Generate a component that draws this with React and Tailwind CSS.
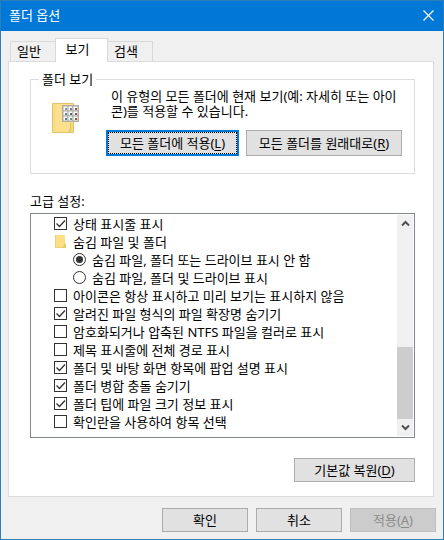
import { useState } from 'react'

const PESTANAS = [
  { id: 'general', texto: '일반' },
  { id: 'view', texto: '보기' },
  { id: 'search', texto: '검색' },
]

const OPCIONES = [
  { tipo: 'check', id: 'statusbar', texto: '상태 표시줄 표시', activo: true },
  { tipo: 'grupo', id: 'hidden', texto: '숨김 파일 및 폴더' },
  { tipo: 'radio', id: 'hide', texto: '숨김 파일, 폴더 또는 드라이브 표시 안 함', activo: true },
  { tipo: 'radio', id: 'show', texto: '숨김 파일, 폴더 및 드라이브 표시' },
  { tipo: 'check', id: 'icons', texto: '아이콘은 항상 표시하고 미리 보기는 표시하지 않음' },
  { tipo: 'check', id: 'ext', texto: '알려진 파일 형식의 파일 확장명 숨기기', activo: true },
  { tipo: 'check', id: 'ntfs', texto: '암호화되거나 압축된 NTFS 파일을 컬러로 표시' },
  { tipo: 'check', id: 'path', texto: '제목 표시줄에 전체 경로 표시' },
  { tipo: 'check', id: 'popup', texto: '폴더 및 바탕 화면 항목에 팝업 설명 표시', activo: true },
  { tipo: 'check', id: 'merge', texto: '폴더 병합 충돌 숨기기', activo: true },
  { tipo: 'check', id: 'size', texto: '폴더 팁에 파일 크기 정보 표시', activo: true },
  { tipo: 'check', id: 'boxes', texto: '확인란을 사용하여 항목 선택' },
]

// colour of each thumbnail in the 3x3 grid
const MINIATURAS = [
  ['#7d93a8', '#5f7f9a', '#a5532f'],
  ['#5f8a8f', '#3f6fa0', '#7a5a50'],
  ['#6a7f90', '#4f9a78', '#a8452a'],
]

function FolderIcon() {
  return (
    <svg width="28" height="30" viewBox="0 0 28 30" aria-hidden="true">
      <path d="M1.5.5h21v29h-21z" fill="#fbe08d" stroke="#e2c469" />
      <path d="M19 20h1v6l-1 2v1h-1v-2l1-2z" fill="#e3c062" />
      <path d="M20 20h2v9h-3l1-3z" fill="#f6d67c" />
      <path d="M2 1h2v28H2z" fill="#f8d985" />
      <path d="M11 2h17v17H11z" fill="#b0aca4" />
      {MINIATURAS.map((fila, y) =>
        fila.map((color, x) => (
          <g key={`${x}-${y}`}>
            <rect x={12 + x * 5} y={3 + y * 5} width="5" height="5" fill="#fff" stroke="#b0aca4" />
            <rect x={14 + x * 5} y={5 + y * 5} width="2" height="2" fill={color} />
          </g>
        ))
      )}
    </svg>
  )
}

function SmallFolder() {
  return (
    <svg width="13" height="13" viewBox="0 0 13 13" aria-hidden="true">
      <path d="M1 0h10v8l1 2v3H1z" fill="#fbdf86" />
      <path d="M10 8h1l1 2v3H9v-2h1z" fill="#efcb68" />
      <path d="M1.5 0v12.5H9" fill="none" stroke="#f0cf72" />
    </svg>
  )
}

function Marca({ radio, ...props }) {
  return (
    <span className="grid size-[13px] shrink-0">
      <input
        type={radio ? 'radio' : 'checkbox'}
        className={`peer col-start-1 row-start-1 size-[13px] appearance-none border border-[#333] bg-white ${radio ? 'rounded-full' : ''}`}
        {...props}
      />
      <svg
        viewBox="0 0 13 13"
        className="pointer-events-none invisible col-start-1 row-start-1 size-[13px] peer-checked:visible"
        aria-hidden="true"
      >
        {radio
          ? <circle cx="6.5" cy="6.5" r="3.5" fill="#333" />
          : <path d="M2.5 6.5l3 3 5.5-6" fill="none" stroke="#333" strokeWidth="1.3" />}
      </svg>
    </span>
  )
}

function Boton({ className = '', principal, tecla, children, ...props }) {
  return (
    <button
      type="button"
      className={`whitespace-nowrap bg-[#e1e1e1] leading-4 disabled:border-[#bfbfbf] disabled:bg-[#ccc] disabled:text-[#8a8a8a] ${
        principal
          ? 'border-2 border-[#0078d7] outline-1 -outline-offset-3 outline-dotted outline-black'
          : 'border border-[#adadad]'
      } ${className}`}
      {...props}
    >
      {children}
      {tecla && <>(<span className="underline underline-offset-2">{tecla}</span>)</>}
    </button>
  )
}

function Flecha({ abajo }) {
  return (
    <button type="button" aria-label={abajo ? '아래로' : '위로'} className="flex h-[17px] items-center justify-center">
      <svg width="9" height="7" viewBox="0 0 9 7" className={abajo ? 'rotate-180' : ''} aria-hidden="true">
        <path d="M1 5.5l3.5-3.5L8 5.5" fill="none" stroke="#505050" strokeWidth="2" />
      </svg>
    </button>
  )
}

export default function App() {
  const [pestana, setPestana] = useState('view')
  const [marcadas, setMarcadas] = useState(() => OPCIONES.filter(o => o.tipo === 'check' && o.activo).map(o => o.id))
  const [ocultos, setOcultos] = useState('hide')

  const alternar = (id) => {
    setMarcadas(m => m.includes(id) ? m.filter(x => x !== id) : [...m, id])
  }

  return (
    <div className="flex min-h-screen flex-col border border-[#2d7fb8] bg-[#f0f0f0] font-['Noto_Sans','Noto_Sans_CJK_KR',sans-serif] text-[13px] leading-4 text-black">

      {/* Title bar */}
      <header className="flex h-[30px] items-center justify-between bg-[#0078d7] pb-0.5 pl-2 pr-[9px] text-white">
        <h1>폴더 옵션</h1>
        <button type="button" aria-label="닫기">
          <svg width="11" height="11" viewBox="0 0 11 11" aria-hidden="true">
            <path d="M.5.5l10 10M10.5.5l-10 10" stroke="#fff" strokeWidth="1.2" />
          </svg>
        </button>
      </header>

      <main className="flex grow flex-col pb-[7px] pl-[7px] pr-[9px] pt-[7px]">

        {/* Tabs */}
        <div role="tablist" className="flex items-end pl-0.5">
          {PESTANAS.map(p => (
            <button
              key={p.id}
              type="button"
              role="tab"
              aria-selected={pestana === p.id}
              onClick={() => setPestana(p.id)}
              className={pestana === p.id
                ? 'z-10 -mx-px -mb-px h-6 w-[53px] border border-b-0 border-[#d9d9d9] bg-white pb-1 pr-2'
                : 'h-5 w-[46px] border border-b-0 border-[#d9d9d9] bg-[#f0f0f0] pb-0.5 pl-1.5 text-left'}
            >
              {p.texto}
            </button>
          ))}
        </div>

        <section role="tabpanel" className="flex grow flex-col border border-[#dcdcdc] bg-white pb-3.5 pl-[21px] pr-[18px] pt-[9px]">

          {/* Folder views */}
          <fieldset className="min-w-0 border border-[#dcdcdc] pb-[17px] pl-5 pr-3">
            <legend className="-ml-3 px-[3px]">폴더 보기</legend>
            <div className="flex gap-[27px]">
              <div className="shrink-0 pt-4">
                <FolderIcon />
              </div>
              <div className="grow pt-0.5">
                <p className="pl-[5px] leading-[15px]">
                  이 유형의 모든 폴더에 현재 보기(예: 자세히 또는 아이콘)를 적용할 수 있습니다.
                </p>
                <div className="mt-[11px] flex gap-[7px]">
                  <Boton principal tecla="L" className="h-[26px] w-[133px]">모든 폴더에 적용</Boton>
                  <Boton tecla="R" className="h-[26px] w-[156px]">모든 폴더를 원래대로</Boton>
                </div>
              </div>
            </div>
          </fieldset>

          {/* Advanced settings */}
          <h2 id="avanzada" className="mb-1 mt-[19px]">고급 설정:</h2>
          <div className="flex grow border border-[#828790] py-px pr-px">
            <ul aria-labelledby="avanzada" className="grow pl-[23px]">
              {OPCIONES.map(o => (
                <li key={o.id} className={o.tipo === 'radio' ? 'h-[18px] pl-[19px]' : 'h-[18px]'}>
                  {o.tipo === 'grupo' ? (
                    <span className="flex h-[17px] items-center gap-1.5">
                      <SmallFolder />
                      {o.texto}
                    </span>
                  ) : (
                    <label className="flex h-[17px] items-center gap-1.5 whitespace-nowrap">
                      {o.tipo === 'radio'
                        ? <Marca radio name="ocultos" checked={ocultos === o.id} onChange={() => setOcultos(o.id)} />
                        : <Marca checked={marcadas.includes(o.id)} onChange={() => alternar(o.id)} />}
                      {o.texto}
                    </label>
                  )}
                </li>
              ))}
            </ul>
            <div className="flex w-4 shrink-0 flex-col bg-[#f0f0f0]">
              <Flecha />
              <div className="flex grow flex-col justify-end">
                <div className="h-[72px] bg-[#cdcdcd]" />
              </div>
              <Flecha abajo />
            </div>
          </div>

          <Boton tecla="D" className="mt-5 h-6 w-[121px] self-end">기본값 복원</Boton>
        </section>

        {/* Dialog buttons */}
        <footer className="-mr-0.5 mt-[11px] flex justify-end gap-2">
          <Boton className="h-6 w-[86px]">확인</Boton>
          <Boton className="h-6 w-[86px]">취소</Boton>
          <Boton tecla="A" disabled className="h-6 w-[86px]">적용</Boton>
        </footer>
      </main>
    </div>
  )
}
